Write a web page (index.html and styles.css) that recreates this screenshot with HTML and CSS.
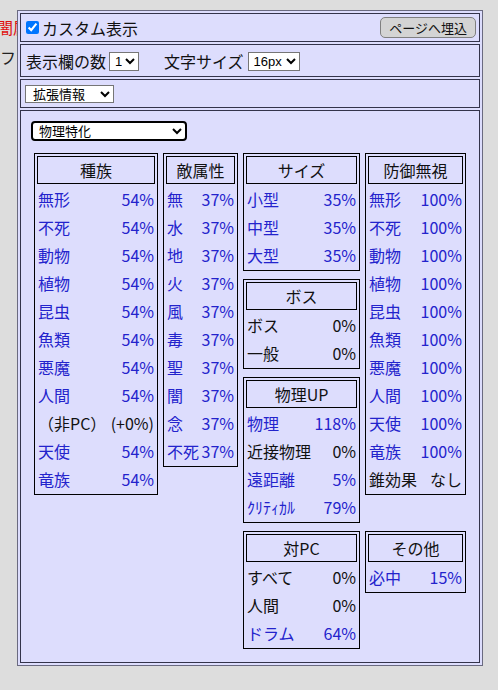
FILE: index.html
```html
<!DOCTYPE html>
<html lang="ja">
<head>
<meta charset="utf-8">
<title>カスタム表示</title>
<link rel="stylesheet" href="styles.css">
</head>
<body>
<div class="under">
  <div class="l1">闇属性</div>
  <div class="l2">ーフ</div>
</div>

<div class="panel">
  <div class="row r1">
    <input type="checkbox" class="chk" checked>
    <span class="lbl">カスタム表示</span>
    <button class="btn">ページへ埋込</button>
  </div>
  <div class="row r2">
    <span class="lbl">表示欄の数</span>
    <select class="sel s-num"><option>1</option></select>
    <span class="lbl lbl2">文字サイズ</span>
    <select class="sel s-size"><option>16px</option></select>
  </div>
  <div class="row r3">
    <select class="sel s-ext"><option>拡張情報</option></select>
  </div>
  <div class="row r4">
    <select class="sel s-mode"><option>物理特化</option></select>
    <div class="grid">
      <div class="box c1">
        <div class="hd">種族</div>
        <div class="it b"><span>無形</span><span>54%</span></div>
        <div class="it b"><span>不死</span><span>54%</span></div>
        <div class="it b"><span>動物</span><span>54%</span></div>
        <div class="it b"><span>植物</span><span>54%</span></div>
        <div class="it b"><span>昆虫</span><span>54%</span></div>
        <div class="it b"><span>魚類</span><span>54%</span></div>
        <div class="it b"><span>悪魔</span><span>54%</span></div>
        <div class="it b"><span>人間</span><span>54%</span></div>
        <div class="it k"><span>（非PC）</span><span>(+0%)</span></div>
        <div class="it b"><span>天使</span><span>54%</span></div>
        <div class="it b"><span>竜族</span><span>54%</span></div>
      </div>
      <div class="box c2">
        <div class="hd">敵属性</div>
        <div class="it b"><span>無</span><span>37%</span></div>
        <div class="it b"><span>水</span><span>37%</span></div>
        <div class="it b"><span>地</span><span>37%</span></div>
        <div class="it b"><span>火</span><span>37%</span></div>
        <div class="it b"><span>風</span><span>37%</span></div>
        <div class="it b"><span>毒</span><span>37%</span></div>
        <div class="it b"><span>聖</span><span>37%</span></div>
        <div class="it b"><span>闇</span><span>37%</span></div>
        <div class="it b"><span>念</span><span>37%</span></div>
        <div class="it b"><span>不死</span><span>37%</span></div>
      </div>
      <div class="stack c3">
        <div class="box">
          <div class="hd">サイズ</div>
          <div class="it b"><span>小型</span><span>35%</span></div>
          <div class="it b"><span>中型</span><span>35%</span></div>
          <div class="it b"><span>大型</span><span>35%</span></div>
        </div>
        <div class="box">
          <div class="hd">ボス</div>
          <div class="it k"><span>ボス</span><span>0%</span></div>
          <div class="it k"><span>一般</span><span>0%</span></div>
        </div>
        <div class="box">
          <div class="hd">物理UP</div>
          <div class="it b"><span>物理</span><span>118%</span></div>
          <div class="it k"><span>近接物理</span><span>0%</span></div>
          <div class="it b"><span>遠距離</span><span>5%</span></div>
          <div class="it b"><span>ｸﾘﾃｨｶﾙ</span><span>79%</span></div>
        </div>
      </div>
      <div class="box c4">
        <div class="hd">防御無視</div>
        <div class="it b"><span>無形</span><span>100%</span></div>
        <div class="it b"><span>不死</span><span>100%</span></div>
        <div class="it b"><span>動物</span><span>100%</span></div>
        <div class="it b"><span>植物</span><span>100%</span></div>
        <div class="it b"><span>昆虫</span><span>100%</span></div>
        <div class="it b"><span>魚類</span><span>100%</span></div>
        <div class="it b"><span>悪魔</span><span>100%</span></div>
        <div class="it b"><span>人間</span><span>100%</span></div>
        <div class="it b"><span>天使</span><span>100%</span></div>
        <div class="it b"><span>竜族</span><span>100%</span></div>
        <div class="it k"><span>錐効果</span><span>なし</span></div>
      </div>
      <div class="box c3b">
        <div class="hd">対PC</div>
        <div class="it k"><span>すべて</span><span>0%</span></div>
        <div class="it k"><span>人間</span><span>0%</span></div>
        <div class="it b"><span>ドラム</span><span>64%</span></div>
      </div>
      <div class="box c4b">
        <div class="hd">その他</div>
        <div class="it b"><span>必中</span><span>15%</span></div>
      </div>
    </div>
  </div>
</div>
</body>
</html>
```

FILE: styles.css
```css
html, body {
  margin: 0;
  padding: 0;
}
body {
  background: #dddddd;
  font-family: "Noto Sans CJK JP", "Noto Sans", sans-serif;
  font-size: 16px;
  color: #111;
  width: 498px;
  height: 690px;
  overflow: hidden;
  position: relative;
}

.under {
  padding-top: 12px;
  line-height: 30px;
  white-space: nowrap;
}
.under .l1 {
  color: #e01010;
  margin-left: -3px;
}
.under .l2 {
  margin-left: -15px;
  color: #222;
}

.panel {
  position: absolute;
  left: 17px;
  top: 10px;
  width: 466px;
  height: 656px;
  box-sizing: border-box;
  border: 1px solid #6a6a80;
  background: #ddddfd;
  padding: 2px;
  display: flex;
  flex-direction: column;
  gap: 2px;
}

.row {
  border: 1px solid #33334a;
  box-sizing: border-box;
  display: flex;
  align-items: center;
}

.r1 {
  height: 29px;
  padding: 0 3px 0 1px;
}
.chk {
  margin: 3px 3px 3px 4px;
  width: 13px;
  height: 13px;
}
.lbl {
  line-height: 20px;
  white-space: nowrap;
}
.btn {
  margin-left: auto;
  height: 21px;
  box-sizing: border-box;
  padding: 0 8px;
  font-family: "Noto Sans CJK JP", sans-serif;
  font-size: 13px;
  line-height: 17px;
  color: #111;
  background: #d4d4d4;
  border: 1px solid #808080;
  border-radius: 5px;
}

.r2 {
  height: 33px;
  padding: 1px 0 0 5px;
}
.sel {
  font-family: "Liberation Sans", "Noto Sans CJK JP", sans-serif;
  font-size: 13px;
  color: #000;
  background: #fff;
  border: 1px solid #767676;
  box-sizing: border-box;
  padding: 0 0 0 1px;
  margin: 0;
}
.s-num {
  width: 30px;
  height: 19px;
  margin-left: 3px;
}
.lbl2 {
  margin-left: 25px;
}
.s-size {
  width: 52px;
  height: 19px;
  margin-left: 4px;
}

.r3 {
  height: 29px;
  padding-left: 4px;
}
.s-ext {
  width: 89px;
  height: 18px;
  padding-left: 3px;
}

.r4 {
  flex: 1;
  flex-direction: column;
  align-items: flex-start;
}
.s-mode {
  margin: 10px 0 0 10px;
  width: 156px;
  height: 20px;
  border: 2px solid #000;
  border-radius: 4px;
  padding-left: 2px;
}

.grid {
  margin: 12px 0 0 13px;
  display: grid;
  grid-template-columns: 124px 75px 117px 101px;
  column-gap: 5px;
  row-gap: 8px;
  align-items: start;
}
.c1 { grid-column: 1; grid-row: 1; }
.c2 { grid-column: 2; grid-row: 1; }
.c3 { grid-column: 3; grid-row: 1; }
.c4 { grid-column: 4; grid-row: 1; }
.c3b { grid-column: 3; grid-row: 2; }
.c4b { grid-column: 4; grid-row: 2; }

.stack {
  display: flex;
  flex-direction: column;
  gap: 8px;
}

.box {
  border: 1px solid #000;
  padding: 2px;
  display: flex;
  flex-direction: column;
  gap: 2px;
}
.hd {
  height: 28px;
  box-sizing: border-box;
  border: 1px solid #000;
  text-align: center;
  line-height: 26px;
  color: #111;
}
.it {
  height: 26px;
  line-height: 26px;
  padding: 0 1px;
  display: flex;
  justify-content: space-between;
  white-space: nowrap;
}
.it.b {
  color: #2323cc;
}
.it.k {
  color: #111;
}
```
